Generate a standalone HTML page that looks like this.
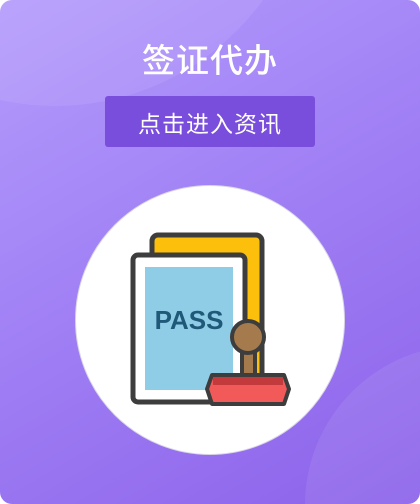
<!DOCTYPE html>
<html><head><meta charset="utf-8"><style>
html,body{margin:0;padding:0;background:#fff;width:420px;height:504px;overflow:hidden}
.card{position:absolute;left:0;top:0;width:420px;height:504px;border-radius:12px;overflow:hidden;background:linear-gradient(150deg,#b49cfc 0%,#a384f6 40%,#8c62ea 100%)}
.c1{position:absolute;left:-202px;top:-408px;width:514px;height:514px;border-radius:50%;background:rgba(255,255,255,0.08)}
.c2{position:absolute;left:305px;top:345px;width:320px;height:320px;border-radius:50%;background:rgba(255,255,255,0.08)}
.title{position:absolute;top:36px;left:0;width:420px;height:44px;display:flex;align-items:center;justify-content:center;color:#fff;font:500 33px "Liberation Sans","Noto Sans CJK SC",sans-serif;letter-spacing:1px}
.btn{position:absolute;left:105px;top:96px;width:210px;height:51px;background:#7a4edc;border-radius:3px;color:#fff;display:flex;align-items:center;justify-content:center;font:23px "Liberation Sans","Noto Sans CJK SC",sans-serif;letter-spacing:1px}
.circ{position:absolute;left:75px;top:185px;width:268px;height:268px;border-radius:50%;background:#fff;border:1px solid #d9d6e6}
svg{position:absolute;left:0;top:0}
</style></head><body>
<div class="card"><div class="c1"></div><div class="c2"></div>
<div class="title">签证代办</div>
<div class="btn">点击进入资讯</div>
<div class="circ"></div>
<svg width="420" height="504">
<rect x="152" y="235" width="110" height="160" rx="6" fill="#fbbf0c" stroke="#3d3d3d" stroke-width="5"/>
<rect x="133" y="255" width="112" height="147" rx="5" fill="#fff" stroke="#3d3d3d" stroke-width="5"/>
<rect x="145" y="267" width="88" height="123" fill="#8fcde6"/>
<text x="189" y="329" text-anchor="middle" font-family="Liberation Sans,sans-serif" font-weight="bold" font-size="26" fill="#1f5878">PASS</text>
<rect x="242" y="348" width="13" height="30" fill="#a57b4d" stroke="#3d3d3d" stroke-width="4"/>
<circle cx="248" cy="337" r="16" fill="#a57b4d" stroke="#3d3d3d" stroke-width="4"/>
<polygon points="212,375 284,375 289,389 284,404 212,404 207,389" fill="#f25a5a" stroke="#3d3d3d" stroke-width="4" stroke-linejoin="round"/>
<rect x="213" y="377" width="70" height="8" fill="#c23a3c"/>
</svg>
</div>
</body></html>
